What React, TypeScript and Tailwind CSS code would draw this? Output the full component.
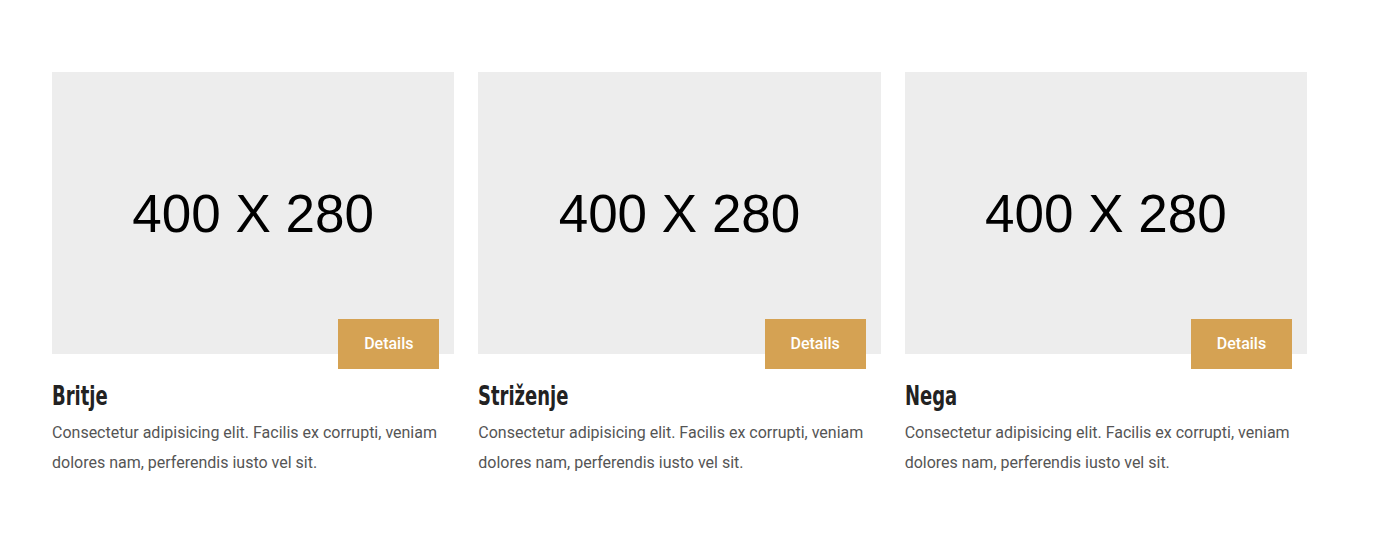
import React from "react";

const cards = [
  { title: "Britje" },
  { title: "Striženje" },
  { title: "Nega" },
];

export default function App() {
  return (
    <div className="w-[1394px] h-[538px] bg-white overflow-hidden">
      <div className="ml-[52px] mt-[72px] w-[1255px] grid grid-cols-3 gap-x-[24px]">
        {cards.map((c) => (
          <div key={c.title} className="flex flex-col">
            <div className="relative h-[282px] bg-[#ededed] flex items-center justify-center">
              <span
                className="text-[53px] text-black leading-none"
                style={{ fontFamily: '"Liberation Sans", Arial, sans-serif' }}
              >
                400 X 280
              </span>
              <div
                className="absolute right-[15px] bottom-[-15px] w-[101px] h-[50px] bg-[#d5a253] text-white text-[16px] font-medium flex items-center justify-center"
                style={{ fontFamily: 'Roboto, sans-serif' }}
              >
                Details
              </div>
            </div>
            <h3
              className="mt-[27px] text-[27px] leading-[30px] font-bold text-[#222] origin-left scale-x-[0.74] whitespace-nowrap"
              style={{ fontFamily: '"DejaVu Sans Condensed", "DejaVu Sans", sans-serif', fontStretch: "condensed" }}
            >
              {c.title}
            </h3>
            <p
              className="mt-[7px] text-[16px] leading-[30px] text-[#555]"
              style={{ fontFamily: 'Roboto, sans-serif' }}
            >
              Consectetur adipisicing elit. Facilis ex corrupti, veniam dolores nam, perferendis iusto vel sit.
            </p>
          </div>
        ))}
      </div>
    </div>
  );
}
